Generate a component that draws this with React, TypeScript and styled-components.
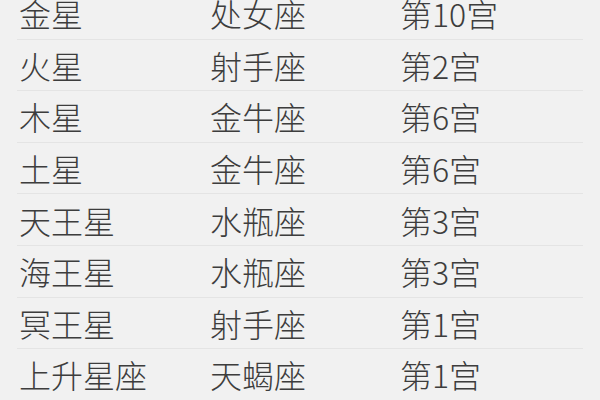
import * as React from 'react';
import styled, {createGlobalStyle} from "styled-components";

const GlobalStyle = createGlobalStyle`
  html, body {
    margin: 0;
    padding: 0;
    background: #f1f1f1;
  }
  body {
    width: 600px;
    height: 400px;
    overflow: hidden;
    font-family: "Noto Sans CJK SC", "Noto Sans", sans-serif;
  }
`;

const Table = styled.div`
  display: flex;
  flex-direction: column;
  margin: -12px 17px 0 17px;
`;

const Row = styled.div`
  display: grid;
  grid-template-columns: 191px 190px 1fr;
  align-items: center;
  height: 51.6px;
  box-sizing: border-box;
  border-bottom: 1px solid #e4e4e4;
`;

const Cell = styled.div`
  font-size: 32px;
  font-weight: 300;
  line-height: 1;
  color: #3d3d3d;
  padding: 0 0 0 2px;
  white-space: nowrap;
`;

const rows: [string, string, string][] = [
    ["金星", "处女座", "第10宫"],
    ["火星", "射手座", "第2宫"],
    ["木星", "金牛座", "第6宫"],
    ["土星", "金牛座", "第6宫"],
    ["天王星", "水瓶座", "第3宫"],
    ["海王星", "水瓶座", "第3宫"],
    ["冥王星", "射手座", "第1宫"],
    ["上升星座", "天蝎座", "第1宫"],
];

export default function App() {
    return (
        <>
            <GlobalStyle/>
            <Table>
                {rows.map((r, i) => (
                    <Row key={i}>
                        <Cell>{r[0]}</Cell>
                        <Cell>{r[1]}</Cell>
                        <Cell>{r[2]}</Cell>
                    </Row>
                ))}
            </Table>
        </>
    );
}
